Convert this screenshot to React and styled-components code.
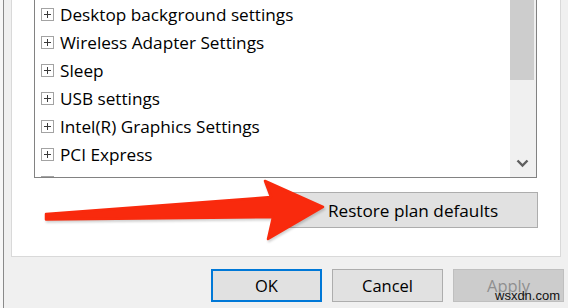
import React from "react";
import styled, { createGlobalStyle } from "styled-components";

const Global = createGlobalStyle`
  html, body { margin: 0; padding: 0; }
  body {
    width: 568px; height: 308px; overflow: hidden;
    background: #f0f0f0;
    font-family: "Open Sans", "Noto Sans", sans-serif;
    color: #000;
  }
`;

const Page = styled.div`
  position: relative;
  display: flex;
  width: 568px;
  height: 308px;
  overflow: hidden;
`;

const OuterEdge = styled.div`
  width: 3px;
  background: #f7f7f7;
  border-right: 1px solid #8a8a8a;
`;

const Main = styled.div`
  flex: 1;
  display: flex;
  flex-direction: column;
`;

const TabPanel = styled.div`
  margin: 0 7px;
  height: 256px;
  background: #fff;
  border: 1px solid #d9d9d9;
  border-top: none;
  padding: 0 23px 0 22px;
  display: flex;
  flex-direction: column;
`;

const Tree = styled.div`
  display: flex;
  height: 177px;
  border: 1px solid #828282;
  border-top: none;
  overflow: hidden;
`;

const List = styled.ul`
  flex: 1;
  margin: 0;
  padding: 0;
  list-style: none;
  overflow: hidden;
`;

const Row = styled.li`
  height: 28px;
  display: flex;
  align-items: center;
  padding-left: 6px;
  gap: 6px;
  font-size: 17.2px;
  white-space: nowrap;
`;

const Expander = styled.span`
  position: relative;
  width: 11px;
  height: 11px;
  border: 1px solid #a3a3a3;
  flex: none;
  &::before, &::after {
    content: "";
    position: absolute;
    background: #3a3a3a;
  }
  &::before { left: 2px; right: 2px; top: 5px; height: 1px; }
  &::after { top: 2px; bottom: 2px; left: 5px; width: 1px; }
`;

const Scrollbar = styled.div`
  width: 26px;
  background: #f0f0f0;
  display: flex;
  flex-direction: column;
`;

const Thumb = styled.div`
  width: 24px;
  height: 80px;
  background: #cdcdcd;
`;

const ArrowButton = styled.div`
  margin-top: auto;
  height: 27px;
  display: flex;
  align-items: center;
  justify-content: center;
  padding-right: 1px;
`;

const RestoreRow = styled.div`
  display: flex;
  justify-content: flex-end;
  margin-top: 14px;
  margin-right: -1px;
`;

const WinButton = styled.button`
  box-sizing: border-box;
  width: ${(p) => p.$w || 111}px;
  height: ${(p) => p.$h || 33}px;
  font-family: "Open Sans", "Noto Sans", sans-serif;
  font-size: ${(p) => p.$fs || 16.5}px;
  padding: 0;
  background: ${(p) => (p.$disabled ? "#cccccc" : "#e1e1e1")};
  color: ${(p) => (p.$disabled ? "#8f8f8f" : "#000")};
  border: ${(p) =>
    p.$default ? "2px solid #0078d7" : p.$disabled ? "1px solid #bfbfbf" : "1px solid #adadad"};
  display: flex;
  align-items: center;
  justify-content: center;
`;

const Footer = styled.div`
  display: flex;
  justify-content: flex-end;
  gap: 10px;
  padding: 12px 4px 0 0;
`;

const Overlay = styled.svg`
  position: absolute;
  left: 0;
  top: 0;
  pointer-events: none;
  filter: drop-shadow(1px 2px 1px rgba(0, 0, 0, 0.18));
`;

const Watermark = styled.div`
  position: absolute;
  left: 495px;
  top: 288px;
  font-family: "Liberation Sans", Arial, sans-serif;
  font-size: 13px;
  color: #111;
`;

const items = [
  "Desktop background settings",
  "Wireless Adapter Settings",
  "Sleep",
  "USB settings",
  "Intel(R) Graphics Settings",
  "PCI Express",
  "Processor power management",
];

export default function App() {
  return (
    <>
      <Global />
      <Page>
        <OuterEdge />
        <Main>
          <TabPanel>
            <Tree>
              <List>
                {items.map((t) => (
                  <Row key={t}>
                    <Expander />
                    <span>{t}</span>
                  </Row>
                ))}
              </List>
              <Scrollbar>
                <Thumb />
                <ArrowButton>
                  <svg width="13" height="9" viewBox="0 0 13 9">
                    <polyline points="1.5,1.5 6.5,6.5 11.5,1.5" fill="none" stroke="#5f5f5f" strokeWidth="2.4" />
                  </svg>
                </ArrowButton>
              </Scrollbar>
            </Tree>
            <RestoreRow>
              <WinButton $w={250} $h={36} $fs={17.2}>Restore plan defaults</WinButton>
            </RestoreRow>
          </TabPanel>
          <Footer>
            <WinButton $default>OK</WinButton>
            <WinButton>Cancel</WinButton>
            <WinButton $disabled>Apply</WinButton>
          </Footer>
        </Main>
        <Overlay width="568" height="308" viewBox="0 0 568 308">
          <polygon
            points="46,214 271,197 265,181 323,207 268,239 273,217 46,219.5"
            fill="#f92a0d"
            stroke="#f92a0d"
            strokeWidth="2.5"
            strokeLinejoin="round"
          />
        </Overlay>
        <Watermark>wsxdn.com</Watermark>
      </Page>
    </>
  );
}
